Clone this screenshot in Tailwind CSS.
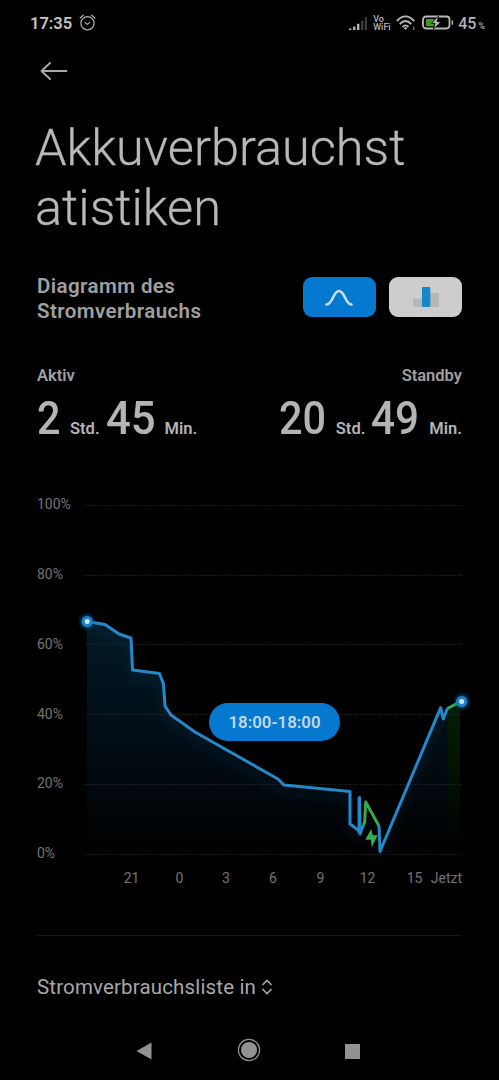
<!DOCTYPE html>
<html lang="de">
<head>
  <meta charset="UTF-8">
  <meta name="viewport" content="width=device-width, initial-scale=1.0">
  <title>Akkuverbrauchsstatistiken</title>
  <script src="https://cdn.jsdelivr.net/npm/@tailwindcss/browser@4"></script>
</head>
<body class="bg-black h-[1080px] w-[499px] overflow-hidden flex flex-col font-['Roboto',sans-serif] text-[#b4b4b4]">
  <!-- Status bar -->
  <div class="flex items-center justify-between h-[46px] pl-[30px] pr-[14px] shrink-0">
    <div class="flex items-center gap-[7px]">
      <span class="text-[16.5px] leading-[20px] pt-[1px] font-semibold text-[#c4c4c4]">17:35</span>
      <svg class="w-[17px] h-[17px] -mt-[1px]" viewBox="0 0 17 17" fill="none" stroke="#b0b0b0" stroke-width="1.2" stroke-linecap="round" stroke-linejoin="round">
        <circle cx="8.5" cy="9.3" r="6.6"/>
        <path d="M1.2 4 4.2 1.2M15.8 4 12.8 1.2M6 8.6 8.3 10.4 10.8 8.4"/>
      </svg>
    </div>
    <div class="flex items-center">
      <svg class="w-[18px] h-[14px] mr-[6px] mt-[1px]" viewBox="0 0 18 14">
        <path fill="#b4b4b4" d="M0 11.500h2.400V13H0zM4 9.500h2.400V13H4zM8 6.800h2.400V13H8z"/>
        <path fill="#3c3c3c" d="M12 3.700h2.400V13H12zM15.800 0H18v13h-2.200z"/>
      </svg>
      <div class="flex flex-col w-[18px] text-[9px] leading-[8px] font-medium mr-[5px]"><span>Vo</span><span>WiFi</span></div>
      <svg class="w-[20px] h-[16px] mr-[6px]" viewBox="0 0 20 16" fill="none" stroke="#b8b8b8" stroke-width="1.900">
        <path d="M.8 6.200Q9.500-3.400 18.200 6.200M3.700 9.100Q9.500 2.800 15.300 9.100M6.600 12Q9.500 8.800 12.400 12"/>
        <path fill="#b8b8b8" stroke="none" d="M7.600 13.100 9.500 11.900l1.900 1.200-1.900 2z"/>
        <path stroke-width="1" stroke="#8a8a8a" d="M17.800 11.500v3.500"/>
      </svg>
      <svg class="w-[32px] h-[15px] mr-[4px] -mt-[1px]" viewBox="0 0 32 15">
        <rect x="1" y="1.500" width="26.500" height="12" rx="3.200" fill="none" stroke="#b8b8b8" stroke-width="1.800"/>
        <path fill="#3f9a1c" d="M4 4h9L9.500 8.500H13L11.500 11.200H4z"/>
        <path fill="#c4c4c4" stroke="#000" stroke-width=".8" d="M16.700.8 9.400 8.300h3.800l-1.800 6 7.600-7.600h-4z"/>
        <path fill="#b8b8b8" d="M29.700 5.300h1.400v4.400h-1.400z"/>
      </svg>
      <span class="text-[16px] leading-[20px] pt-[1px] font-medium">45</span>
      <span class="text-[9px] leading-[8px] font-medium ml-[2px] mt-[6px]">%</span>
    </div>
  </div>

  <!-- Back -->
  <div class="h-[72px] pl-[40px] pt-[16px] shrink-0">
    <svg class="w-[28px] h-[18px]" viewBox="0 0 28 18" fill="none" stroke="#a8a8a8" stroke-width="1.900" stroke-linecap="round" stroke-linejoin="round">
      <path d="M10 1 1.500 9l8.500 8M1.500 9H26.500"/>
    </svg>
  </div>

  <h1 class="h-[159px] pl-[35px] shrink-0 text-[50.5px] leading-[60px] font-light text-[#b8b8b8] [-webkit-text-stroke:0.3px_#b8b8b8]">Akkuverbrauchst<br>atistiken</h1>

  <!-- Chart type -->
  <div class="flex justify-between h-[89px] px-[37px] shrink-0">
    <h2 class="text-[20.5px] leading-[25px] tracking-[0.42px] font-semibold text-[#a0a0a0] -mt-[3.5px]">Diagramm des<br>Stromverbrauchs</h2>
    <div class="flex gap-[13.5px]">
      <button class="w-[72.7px] h-[40px] rounded-[9px] bg-[#0479cf] flex items-center justify-center">
        <svg class="w-[28px] h-[17px]" viewBox="0 0 28 17" fill="none" stroke="#d0dff0" stroke-width="2.500" stroke-linecap="round">
          <path d="M1.500 15.500C8 15.500 8 2 14 2s6 13.500 12.500 13.500"/>
        </svg>
      </button>
      <button class="w-[72.7px] h-[40px] rounded-[9px] bg-[#cdcdcd] flex items-center justify-center">
        <svg class="w-[26px] h-[20px]" viewBox="0 0 26 20">
          <path fill="#b7b7b7" d="M0 11.500h9V20H0zM17 6h9v14h-9z"/>
          <rect x="9" width="8.300" height="20" rx="1" fill="#1488cb"/>
        </svg>
      </button>
    </div>
  </div>

  <!-- Times -->
  <div class="flex justify-between h-[124px] px-[37px] shrink-0 font-semibold text-[#a0a0a0]">
    <div>
      <div class="text-[16.5px] leading-[20px]">Aktiv</div>
      <div class="flex items-baseline mt-[4px] text-[16.5px] leading-[56px] text-[#b4b4b4]">
        <span class="w-[33px] text-[46px] font-medium scale-x-90 origin-left">2</span><span>Std.</span>
        <span class="w-[59px] ml-[6px] text-[46px] font-medium scale-x-[0.95] origin-left">45</span><span>Min.</span>
      </div>
    </div>
    <div class="flex flex-col items-end">
      <div class="text-[16.5px] leading-[20px]">Standby</div>
      <div class="flex items-baseline mt-[4px] text-[16.5px] leading-[56px] text-[#b4b4b4]">
        <span class="w-[57px] text-[46px] font-medium scale-x-[0.9] origin-left">20</span><span>Std.</span>
        <span class="w-[58px] ml-[6px] text-[46px] font-medium scale-x-[0.92] origin-left">49</span><span>Min.</span>
      </div>
    </div>
  </div>

  <!-- Chart -->
  <div class="relative h-[410px] shrink-0">
    <svg class="w-[499px] h-[410px]" viewBox="0 490 499 410">
      <defs>
        <linearGradient id="blueFill" gradientUnits="userSpaceOnUse" x1="0" y1="620" x2="0" y2="854">
          <stop offset="0" stop-color="#021a26"/>
          <stop offset=".55" stop-color="#020c14"/>
          <stop offset="1" stop-color="#000"/>
        </linearGradient>
        <linearGradient id="greenFill" gradientUnits="userSpaceOnUse" x1="0" y1="704" x2="0" y2="854">
          <stop offset="0" stop-color="#041f08"/>
          <stop offset="1" stop-color="#000"/>
        </linearGradient>
        <filter id="glow" x="-20%" y="-20%" width="140%" height="140%"><feGaussianBlur stdDeviation="4"/></filter>
        <filter id="dotGlow" x="-100%" y="-100%" width="300%" height="300%"><feGaussianBlur stdDeviation="2"/></filter>
      </defs>
      <path fill="url(#blueFill)" d="M87 621.500 105 624.500 119 634 131 638 132.500 670 159.500 673.500 163.500 684 165 706 171 715 195 732 278 779 284 785 350 791.500V824L360 834 365.700 802 379 826 380 851.500 440.700 707.700 443.300 719 447.300 708.500V854H87z"/>
      <path fill="url(#greenFill)" d="M447.300 708.500 460 702V854H447.300z"/>
      <g stroke="#2a2d2c" stroke-width="1" stroke-dasharray="1 1.500">
        <path d="M85 505.500H462M85 575.500H462M85 644.500H462M85 714.500H462M85 784.500H462M85 854.500H462"/>
      </g>
      <path filter="url(#glow)" opacity=".2" fill="none" stroke="#0a6aa5" stroke-width="4" d="M87 629 105 632 119 642 131 646 132.500 678 159.500 681.500 165 714 171 723 195 740 284 793 350 799V830L360 840M380 855 440.700 716"/>
      <g fill="none" stroke-width="3" stroke-linejoin="round">
        <path stroke="#2389c8" d="M87 621.500 105 624.500 119 634 131 638 132.500 670 159.500 673.500 163.500 684 165 706 171 715 195 732 278 779 284 785 350 791.500V824L359.500 831V797.500L360 834 363.500 825"/>
        <path stroke="#37a94c" d="M363.500 825 364.700 822 365.700 802 379 826"/>
        <path stroke="#2389c8" d="M379 825.500 380 851.500 440.700 707.700 443.300 719 447.300 708.500"/>
        <path stroke="#37a94c" d="M447.300 708.500 462 701"/>
      </g>
      <path stroke="#2389c8" stroke-width="3.500" d="M359.300 797.500V833"/>
      <path fill="#35b04a" d="M371.200 829 365.300 839.700H371L371.700 847.500 377.700 835.300H372.700z"/>
      <g fill="#0a6fb8" filter="url(#dotGlow)"><circle cx="87" cy="621.500" r="6"/><circle cx="462" cy="701.500" r="6"/></g>
      <g fill="#d3e5f2" stroke="#1b83cc" stroke-width="3"><circle cx="87.200" cy="621.500" r="4"/><circle cx="461.700" cy="701.500" r="4"/></g>
      <g fill="#747474" font-size="14" font-family="Roboto">
        <text x="37" y="509">100%</text>
        <text x="37" y="579">80%</text>
        <text x="37" y="649">60%</text>
        <text x="37" y="718.500">40%</text>
        <text x="37" y="788">20%</text>
        <text x="37" y="858">0%</text>
        <g text-anchor="middle">
          <text x="131.500" y="882.500">21</text>
          <text x="179.500" y="882.500">0</text>
          <text x="226" y="882.500">3</text>
          <text x="273" y="882.500">6</text>
          <text x="320.500" y="882.500">9</text>
          <text x="367.500" y="882.500">12</text>
          <text x="414.500" y="882.500">15</text>
        </g>
        <text x="462" y="882.500" text-anchor="end">Jetzt</text>
      </g>
    </svg>
    <div class="absolute left-[209px] top-[213px] w-[131px] h-[37.5px] rounded-full bg-[#0479cf] flex items-center justify-center pt-[2px] text-[16.8px] font-semibold text-[#c3d8ec]">18:00-18:00</div>
  </div>

  <!-- List selector -->
  <div class="mx-[37px] mt-[35px] h-[88px] border-t border-[#151515] shrink-0 flex items-start gap-[5px] pt-[39px]">
    <span class="text-[20.5px] leading-[25px] tracking-[0.15px] text-[#a8a8a8]">Stromverbrauchsliste in</span>
    <svg class="w-[12px] h-[16px] mt-[3.500px]" viewBox="0 0 12 16" fill="none" stroke="#a8a8a8" stroke-width="1.600">
      <path d="M1.500 6 6 1.500 10.500 6M1.500 10 6 14.500 10.500 10"/>
    </svg>
  </div>

  <!-- Navigation -->
  <div class="h-[56px] shrink-0 flex items-center pl-[136px] -mt-[1px]">
    <svg class="w-[16px] h-[18px] mt-[2px]" viewBox="0 0 16 18"><path fill="#929292" d="M15.500.500V17.500L.500 9z"/></svg>
    <svg class="w-[24px] h-[24px] ml-[85px]" viewBox="0 0 24 24"><circle cx="12" cy="12" r="10.600" fill="none" stroke="#929292" stroke-width="1.200"/><circle cx="12" cy="12" r="8" fill="#929292"/></svg>
    <div class="w-[15px] h-[15px] bg-[#929292] ml-[84px] mt-[2px]"></div>
  </div>
</body>
</html>
